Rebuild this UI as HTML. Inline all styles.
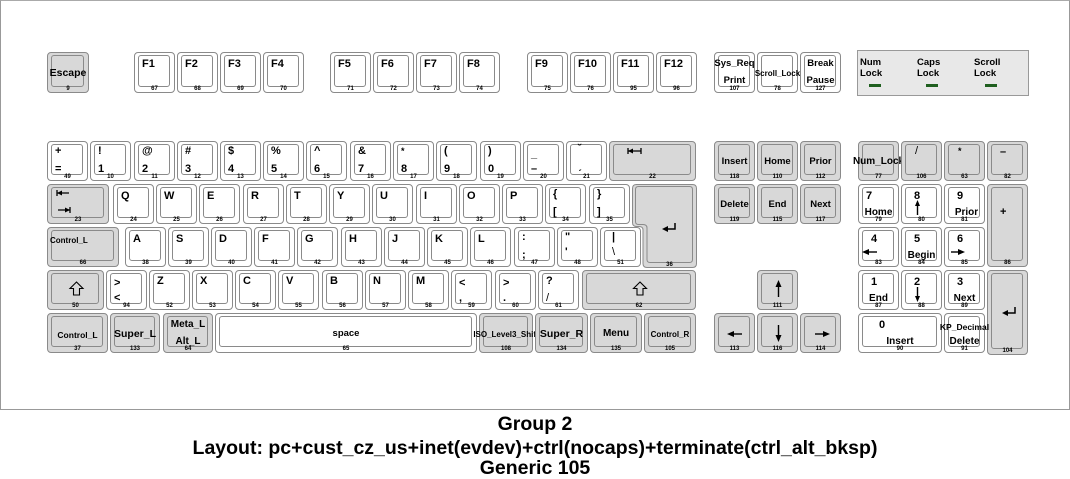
<!DOCTYPE html>
<html><head><meta charset="utf-8">
<style>
*{margin:0;padding:0;box-sizing:border-box}
body{width:1070px;height:477px;background:#fff;position:relative;overflow:hidden;font-family:"Liberation Sans",Arial,sans-serif;font-weight:bold;color:#000}
.frame{position:absolute;left:0;top:0;width:1070px;height:410px;border:1px solid #999;border-top-color:#aaa}
.k{position:absolute;width:41px;height:40px;border:1px solid #8a8a8a;border-radius:4px;background:#fff;font-size:11px;line-height:12px}
.k.g{background:#d8d8d8}
.k i{position:absolute;left:3px;top:2px;right:4px;bottom:5px;border:1px solid #8a8a8a;border-radius:3px}
.k s{text-decoration:none;position:absolute;left:0;right:0;bottom:-1px;text-align:center;font-size:6px;line-height:7px}
.k b{position:absolute;white-space:nowrap;font-weight:bold}
.t{left:7px;top:3px}
.b{left:7px;top:21px}
.m{left:-10px;right:-10px;text-align:center;top:13px}
.k svg{position:absolute;left:0;top:0}
.f{height:41px}
.title{position:absolute;left:0;width:1070px;text-align:center;font-size:19.5px;line-height:20px}
</style></head><body>
<div class="frame"></div>

<!-- Function row -->
<div class="k g f" style="left:47px;top:52px;width:42px"><i></i><b class="m" style="top:14px;font-size:10.5px">Escape</b><s>9</s></div>
<div class="k f" style="left:134px;top:52px"><i></i><b class="t" style="top:5px">F1</b><s>67</s></div>
<div class="k f" style="left:177px;top:52px"><i></i><b class="t" style="top:5px">F2</b><s>68</s></div>
<div class="k f" style="left:220px;top:52px"><i></i><b class="t" style="top:5px">F3</b><s>69</s></div>
<div class="k f" style="left:263px;top:52px"><i></i><b class="t" style="top:5px">F4</b><s>70</s></div>
<div class="k f" style="left:330px;top:52px"><i></i><b class="t" style="top:5px">F5</b><s>71</s></div>
<div class="k f" style="left:373px;top:52px"><i></i><b class="t" style="top:5px">F6</b><s>72</s></div>
<div class="k f" style="left:416px;top:52px"><i></i><b class="t" style="top:5px">F7</b><s>73</s></div>
<div class="k f" style="left:459px;top:52px"><i></i><b class="t" style="top:5px">F8</b><s>74</s></div>
<div class="k f" style="left:527px;top:52px"><i></i><b class="t" style="top:5px">F9</b><s>75</s></div>
<div class="k f" style="left:570px;top:52px"><i></i><b class="t" style="top:5px">F10</b><s>76</s></div>
<div class="k f" style="left:613px;top:52px"><i></i><b class="t" style="top:5px">F11</b><s>95</s></div>
<div class="k f" style="left:656px;top:52px"><i></i><b class="t" style="top:5px">F12</b><s>96</s></div>
<div class="k f" style="left:714px;top:52px"><i></i><b class="m" style="top:5px;font-size:9.5px">Sys_Req</b><b class="m" style="top:22px;font-size:9.5px">Print</b><s>107</s></div>
<div class="k f" style="left:757px;top:52px"><i></i><b class="m" style="top:15px;font-size:8px">Scroll_Lock</b><s>78</s></div>
<div class="k f" style="left:800px;top:52px"><i></i><b class="m" style="top:5px;font-size:9.5px">Break</b><b class="m" style="top:22px;font-size:9.5px">Pause</b><s>127</s></div>

<!-- LED panel -->
<div style="position:absolute;left:857px;top:50px;width:172px;height:46px;background:#e8e8e8;border:1px solid #999"></div>
<div style="position:absolute;left:860px;top:57px;font-size:9.5px;line-height:11px">Num<br>Lock</div>
<div style="position:absolute;left:917px;top:57px;font-size:9.5px;line-height:11px">Caps<br>Lock</div>
<div style="position:absolute;left:974px;top:57px;font-size:9.5px;line-height:11px">Scroll<br>Lock</div>
<div style="position:absolute;left:869px;top:84px;width:12px;height:3px;background:#1f5f1f"></div>
<div style="position:absolute;left:926px;top:84px;width:12px;height:3px;background:#1f5f1f"></div>
<div style="position:absolute;left:985px;top:84px;width:12px;height:3px;background:#1f5f1f"></div>

<!-- Row 1 -->
<div class="k" style="left:47px;top:141px"><i></i><b class="t">+</b><b class="b">=</b><s>49</s></div>
<div class="k" style="left:90px;top:141px"><i></i><b class="t">!</b><b class="b">1</b><s>10</s></div>
<div class="k" style="left:134px;top:141px"><i></i><b class="t">@</b><b class="b">2</b><s>11</s></div>
<div class="k" style="left:177px;top:141px"><i></i><b class="t">#</b><b class="b">3</b><s>12</s></div>
<div class="k" style="left:220px;top:141px"><i></i><b class="t">$</b><b class="b">4</b><s>13</s></div>
<div class="k" style="left:263px;top:141px"><i></i><b class="t">%</b><b class="b">5</b><s>14</s></div>
<div class="k" style="left:306px;top:141px"><i></i><b class="t">^</b><b class="b">6</b><s>15</s></div>
<div class="k" style="left:350px;top:141px"><i></i><b class="t">&amp;</b><b class="b">7</b><s>16</s></div>
<div class="k" style="left:393px;top:141px"><i></i><b class="t" style="font-size:9px">*</b><b class="b">8</b><s>17</s></div>
<div class="k" style="left:436px;top:141px"><i></i><b class="t">(</b><b class="b">9</b><s>18</s></div>
<div class="k" style="left:480px;top:141px"><i></i><b class="t">)</b><b class="b">0</b><s>19</s></div>
<div class="k" style="left:523px;top:141px"><i></i><b class="t" style="top:6px">_</b><b class="b">–</b><s>20</s></div>
<div class="k" style="left:566px;top:141px"><i></i><b class="t" style="left:11px;top:1px">˘</b><b class="b" style="left:11px;top:18px">ˏ</b><s>21</s></div>
<div class="k g" style="left:609px;top:141px;width:87px"><i></i>
<svg width="87" height="40"><path d="M18 6V12M18 9H31M31 6V12" stroke="#000" stroke-width="1.3" fill="none"/><path d="M18 9L23 6.5V11.5Z" fill="#000"/></svg><s>22</s></div>

<!-- Row 2 -->
<div class="k g" style="left:47px;top:184px;width:62px"><i></i>
<svg width="62" height="40"><path d="M9 5V11M9 8H21" stroke="#000" stroke-width="1.3" fill="none"/><path d="M9 8L14 5.5V10.5Z" fill="#000"/><path d="M10 25H22M22 22V28" stroke="#000" stroke-width="1.3" fill="none"/><path d="M22 25L17 22.5V27.5Z" fill="#000"/></svg><s>23</s></div>
<div class="k" style="left:113px;top:184px"><i></i><b class="t" style="top:5px">Q</b><s>24</s></div>
<div class="k" style="left:156px;top:184px"><i></i><b class="t" style="top:5px">W</b><s>25</s></div>
<div class="k" style="left:199px;top:184px"><i></i><b class="t" style="top:5px">E</b><s>26</s></div>
<div class="k" style="left:243px;top:184px"><i></i><b class="t" style="top:5px">R</b><s>27</s></div>
<div class="k" style="left:286px;top:184px"><i></i><b class="t" style="top:5px">T</b><s>28</s></div>
<div class="k" style="left:329px;top:184px"><i></i><b class="t" style="top:5px">Y</b><s>29</s></div>
<div class="k" style="left:372px;top:184px"><i></i><b class="t" style="top:5px">U</b><s>30</s></div>
<div class="k" style="left:416px;top:184px"><i></i><b class="t" style="top:5px">I</b><s>31</s></div>
<div class="k" style="left:459px;top:184px"><i></i><b class="t" style="top:5px">O</b><s>32</s></div>
<div class="k" style="left:502px;top:184px"><i></i><b class="t" style="top:5px">P</b><s>33</s></div>
<div class="k" style="left:545px;top:184px"><i></i><b class="t">{</b><b class="b">[</b><s>34</s></div>
<div class="k" style="left:589px;top:184px"><i></i><b class="t">}</b><b class="b">]</b><s>35</s></div>

<!-- Return (composite) -->
<svg style="position:absolute;left:0;top:0" width="1070" height="477">
<path d="M636 184.5H692.5Q696.5 184.5 696.5 188.5V263.5Q696.5 267.5 692.5 267.5H647Q643 267.5 643 263.5V230Q643 226.5 639 226.5H636.5Q632.5 226.5 632.5 222.5V188.5Q632.5 184.5 636.5 184.5Z" fill="#d8d8d8" stroke="#8a8a8a"/>
<path d="M639 186.5H689.5Q692.5 186.5 692.5 189.5V259.5Q692.5 262.5 689.5 262.5H650Q647 262.5 647 259.5V228Q647 224.5 643 224.5H638.5Q635.5 224.5 635.5 221.5V189.5Q635.5 186.5 638.5 186.5Z" fill="none" stroke="#8a8a8a"/>
<path d="M675 223V229H665" stroke="#000" stroke-width="1.5" fill="none"/><path d="M662 229L668 226V232Z" fill="#000"/>
<text x="669.5" y="266" font-size="6" text-anchor="middle" font-family="Liberation Sans" font-weight="bold">36</text>
</svg>

<!-- Row 3 -->
<div class="k g" style="left:47px;top:227px;width:72px"><i></i><b class="t" style="left:2px;top:7px;font-size:8px">Control_L</b><s>66</s></div>
<div class="k" style="left:125px;top:227px"><i></i><b class="t" style="top:5px">A</b><s>38</s></div>
<div class="k" style="left:168px;top:227px"><i></i><b class="t" style="top:5px">S</b><s>39</s></div>
<div class="k" style="left:211px;top:227px"><i></i><b class="t" style="top:5px">D</b><s>40</s></div>
<div class="k" style="left:254px;top:227px"><i></i><b class="t" style="top:5px">F</b><s>41</s></div>
<div class="k" style="left:297px;top:227px"><i></i><b class="t" style="top:5px">G</b><s>42</s></div>
<div class="k" style="left:341px;top:227px"><i></i><b class="t" style="top:5px">H</b><s>43</s></div>
<div class="k" style="left:384px;top:227px"><i></i><b class="t" style="top:5px">J</b><s>44</s></div>
<div class="k" style="left:427px;top:227px"><i></i><b class="t" style="top:5px">K</b><s>45</s></div>
<div class="k" style="left:470px;top:227px"><i></i><b class="t" style="top:5px">L</b><s>46</s></div>
<div class="k" style="left:514px;top:227px"><i></i><b class="t">:</b><b class="b">;</b><s>47</s></div>
<div class="k" style="left:557px;top:227px"><i></i><b class="t">"</b><b class="b" style="top:18px">'</b><s>48</s></div>
<div class="k" style="left:600px;top:227px"><i></i><b class="t" style="left:11px">|</b><b class="b" style="left:11px;top:18px;font-weight:normal">\</b><s>51</s></div>

<!-- Row 4 -->
<div class="k g" style="left:47px;top:270px;width:57px"><i></i>
<svg width="57" height="40"><path d="M28.5 11L35 17.5H31.5V24H25.5V17.5H22Z" fill="none" stroke="#000" stroke-width="1.1"/></svg><s>50</s></div>
<div class="k" style="left:106px;top:270px"><i></i><b class="t" style="top:6px">&gt;</b><b class="b">&lt;</b><s>94</s></div>
<div class="k" style="left:149px;top:270px"><i></i><b class="t" style="top:4px">Z</b><s>52</s></div>
<div class="k" style="left:192px;top:270px"><i></i><b class="t" style="top:4px">X</b><s>53</s></div>
<div class="k" style="left:235px;top:270px"><i></i><b class="t" style="top:4px">C</b><s>54</s></div>
<div class="k" style="left:278px;top:270px"><i></i><b class="t" style="top:4px">V</b><s>55</s></div>
<div class="k" style="left:322px;top:270px"><i></i><b class="t" style="top:4px">B</b><s>56</s></div>
<div class="k" style="left:365px;top:270px"><i></i><b class="t" style="top:4px">N</b><s>57</s></div>
<div class="k" style="left:408px;top:270px"><i></i><b class="t" style="top:4px">M</b><s>58</s></div>
<div class="k" style="left:451px;top:270px"><i></i><b class="t" style="top:6px">&lt;</b><b class="b">,</b><s>59</s></div>
<div class="k" style="left:495px;top:270px"><i></i><b class="t" style="top:6px">&gt;</b><b class="b">.</b><s>60</s></div>
<div class="k" style="left:538px;top:270px"><i></i><b class="t" style="top:4px">?</b><b class="b" style="font-weight:normal">/</b><s>61</s></div>
<div class="k g" style="left:582px;top:270px;width:114px"><i></i>
<svg width="114" height="40"><path d="M57 11L63.5 17.5H60V24H54V17.5H50.5Z" fill="none" stroke="#000" stroke-width="1.1"/></svg><s>62</s></div>

<!-- Row 5 -->
<div class="k g" style="left:47px;top:313px;width:61px"><i></i><b class="m" style="top:15px;font-size:8.5px">Control_L</b><s>37</s></div>
<div class="k g" style="left:110px;top:313px;width:50px"><i></i><b class="m" style="top:14px;font-size:10.5px">Super_L</b><s>133</s></div>
<div class="k g" style="left:163px;top:313px;width:50px"><i></i><b class="m" style="top:5px;font-size:10px">Meta_L</b><b class="m" style="top:22px;font-size:10px">Alt_L</b><s>64</s></div>
<div class="k" style="left:215px;top:313px;width:262px"><i></i><b class="m" style="top:14px;font-size:9.5px">space</b><s>65</s></div>
<div class="k g" style="left:479px;top:313px;width:54px"><i></i><b class="m" style="top:15px;font-size:8px">ISO_Level3_Shift</b><s>108</s></div>
<div class="k g" style="left:535px;top:313px;width:53px"><i></i><b class="m" style="top:14px;font-size:10.5px">Super_R</b><s>134</s></div>
<div class="k g" style="left:590px;top:313px;width:52px"><i></i><b class="m" style="top:14px;font-size:10px">Menu</b><s>135</s></div>
<div class="k g" style="left:644px;top:313px;width:52px"><i></i><b class="m" style="top:15px;font-size:8px">Control_R</b><s>105</s></div>

<!-- Nav -->
<div class="k g" style="left:714px;top:141px"><i></i><b class="m" style="top:14px;font-size:9.5px">Insert</b><s>118</s></div>
<div class="k g" style="left:757px;top:141px"><i></i><b class="m" style="top:14px;font-size:9.5px">Home</b><s>110</s></div>
<div class="k g" style="left:800px;top:141px"><i></i><b class="m" style="top:14px;font-size:9.5px">Prior</b><s>112</s></div>
<div class="k g" style="left:714px;top:184px"><i></i><b class="m" style="top:14px;font-size:9.5px">Delete</b><s>119</s></div>
<div class="k g" style="left:757px;top:184px"><i></i><b class="m" style="top:14px;font-size:9.5px">End</b><s>115</s></div>
<div class="k g" style="left:800px;top:184px"><i></i><b class="m" style="top:14px;font-size:9.5px">Next</b><s>117</s></div>
<div class="k g" style="left:757px;top:270px"><i></i><svg width="41" height="40"><path d="M20.5 12V26" stroke="#000" stroke-width="1.4"/><path d="M20.5 9L17.5 16H23.5Z" fill="#000"/></svg><s>111</s></div>
<div class="k g" style="left:714px;top:313px"><i></i><svg width="41" height="40"><path d="M15 20H27" stroke="#000" stroke-width="1.4"/><path d="M12 20L19 17V23Z" fill="#000"/></svg><s>113</s></div>
<div class="k g" style="left:757px;top:313px"><i></i><svg width="41" height="40"><path d="M20.5 11V25" stroke="#000" stroke-width="1.4"/><path d="M20.5 28L17.5 21H23.5Z" fill="#000"/></svg><s>116</s></div>
<div class="k g" style="left:800px;top:313px"><i></i><svg width="41" height="40"><path d="M14 20H26" stroke="#000" stroke-width="1.4"/><path d="M29 20L22 17V23Z" fill="#000"/></svg><s>114</s></div>

<!-- Keypad -->
<div class="k g" style="left:858px;top:141px"><i></i><b class="m" style="top:14px;font-size:10px">Num_Lock</b><s>77</s></div>
<div class="k g" style="left:901px;top:141px"><i></i><b class="t" style="left:13px;font-weight:normal">/</b><s>106</s></div>
<div class="k g" style="left:944px;top:141px"><i></i><b class="t" style="left:13px;font-size:9px">*</b><s>63</s></div>
<div class="k g" style="left:987px;top:141px"><i></i><b class="t" style="left:12px;top:4px">–</b><s>82</s></div>

<div class="k" style="left:858px;top:184px"><i></i><b class="t" style="top:5px">7</b><b class="m" style="top:22px;font-size:10px">Home</b><s>79</s></div>
<div class="k" style="left:901px;top:184px"><i></i><b class="t" style="top:5px;left:12px">8</b><svg width="41" height="40"><path d="M15.5 18V30" stroke="#000" stroke-width="1.4"/><path d="M15.5 15L13 21H18Z" fill="#000"/></svg><s>80</s></div>
<div class="k" style="left:944px;top:184px"><i></i><b class="t" style="top:5px;left:12px">9</b><b class="m" style="top:22px;font-size:10px;left:-6px">Prior</b><s>81</s></div>
<div class="k g" style="left:987px;top:184px;height:83px"><i></i><b class="t" style="left:12px;top:21px">+</b><s>86</s></div>

<div class="k" style="left:858px;top:227px"><i></i><b class="t" style="top:5px;left:12px">4</b><svg width="41" height="40"><path d="M6 24H18" stroke="#000" stroke-width="1.4"/><path d="M3 24L10 21V27Z" fill="#000"/></svg><s>83</s></div>
<div class="k" style="left:901px;top:227px"><i></i><b class="t" style="top:5px;left:12px">5</b><b class="m" style="top:22px;font-size:10px">Begin</b><s>84</s></div>
<div class="k" style="left:944px;top:227px"><i></i><b class="t" style="top:5px;left:12px">6</b><svg width="41" height="40"><path d="M6 24H17" stroke="#000" stroke-width="1.4"/><path d="M20 24L13 21V27Z" fill="#000"/></svg><s>85</s></div>

<div class="k" style="left:858px;top:270px"><i></i><b class="t" style="top:5px;left:12px">1</b><b class="m" style="top:22px;font-size:10px">End</b><s>87</s></div>
<div class="k" style="left:901px;top:270px"><i></i><b class="t" style="top:5px;left:12px">2</b><svg width="41" height="40"><path d="M15.5 16V28" stroke="#000" stroke-width="1.4"/><path d="M15.5 31L13 25H18Z" fill="#000"/></svg><s>88</s></div>
<div class="k" style="left:944px;top:270px"><i></i><b class="t" style="top:5px;left:12px">3</b><b class="m" style="top:22px;font-size:10px">Next</b><s>89</s></div>
<div class="k g" style="left:987px;top:270px;height:85px"><i></i><svg width="41" height="85"><path d="M27 36V42H17" stroke="#000" stroke-width="1.5" fill="none"/><path d="M14 42L20 39V45Z" fill="#000"/></svg><s>104</s></div>

<div class="k" style="left:858px;top:313px;width:84px"><i></i><b class="t" style="top:5px;left:20px">0</b><b class="m" style="top:22px;font-size:10px">Insert</b><s>90</s></div>
<div class="k" style="left:944px;top:313px"><i></i><b class="m" style="top:7px;font-size:8.5px">KP_Decimal</b><b class="m" style="top:22px;font-size:10px">Delete</b><s>91</s></div>

<!-- Titles -->
<div class="title" style="top:414px">Group 2</div>
<div class="title" style="top:438px">Layout: pc+cust_cz_us+inet(evdev)+ctrl(nocaps)+terminate(ctrl_alt_bksp)</div>
<div class="title" style="top:458px">Generic 105</div>
</body></html>
